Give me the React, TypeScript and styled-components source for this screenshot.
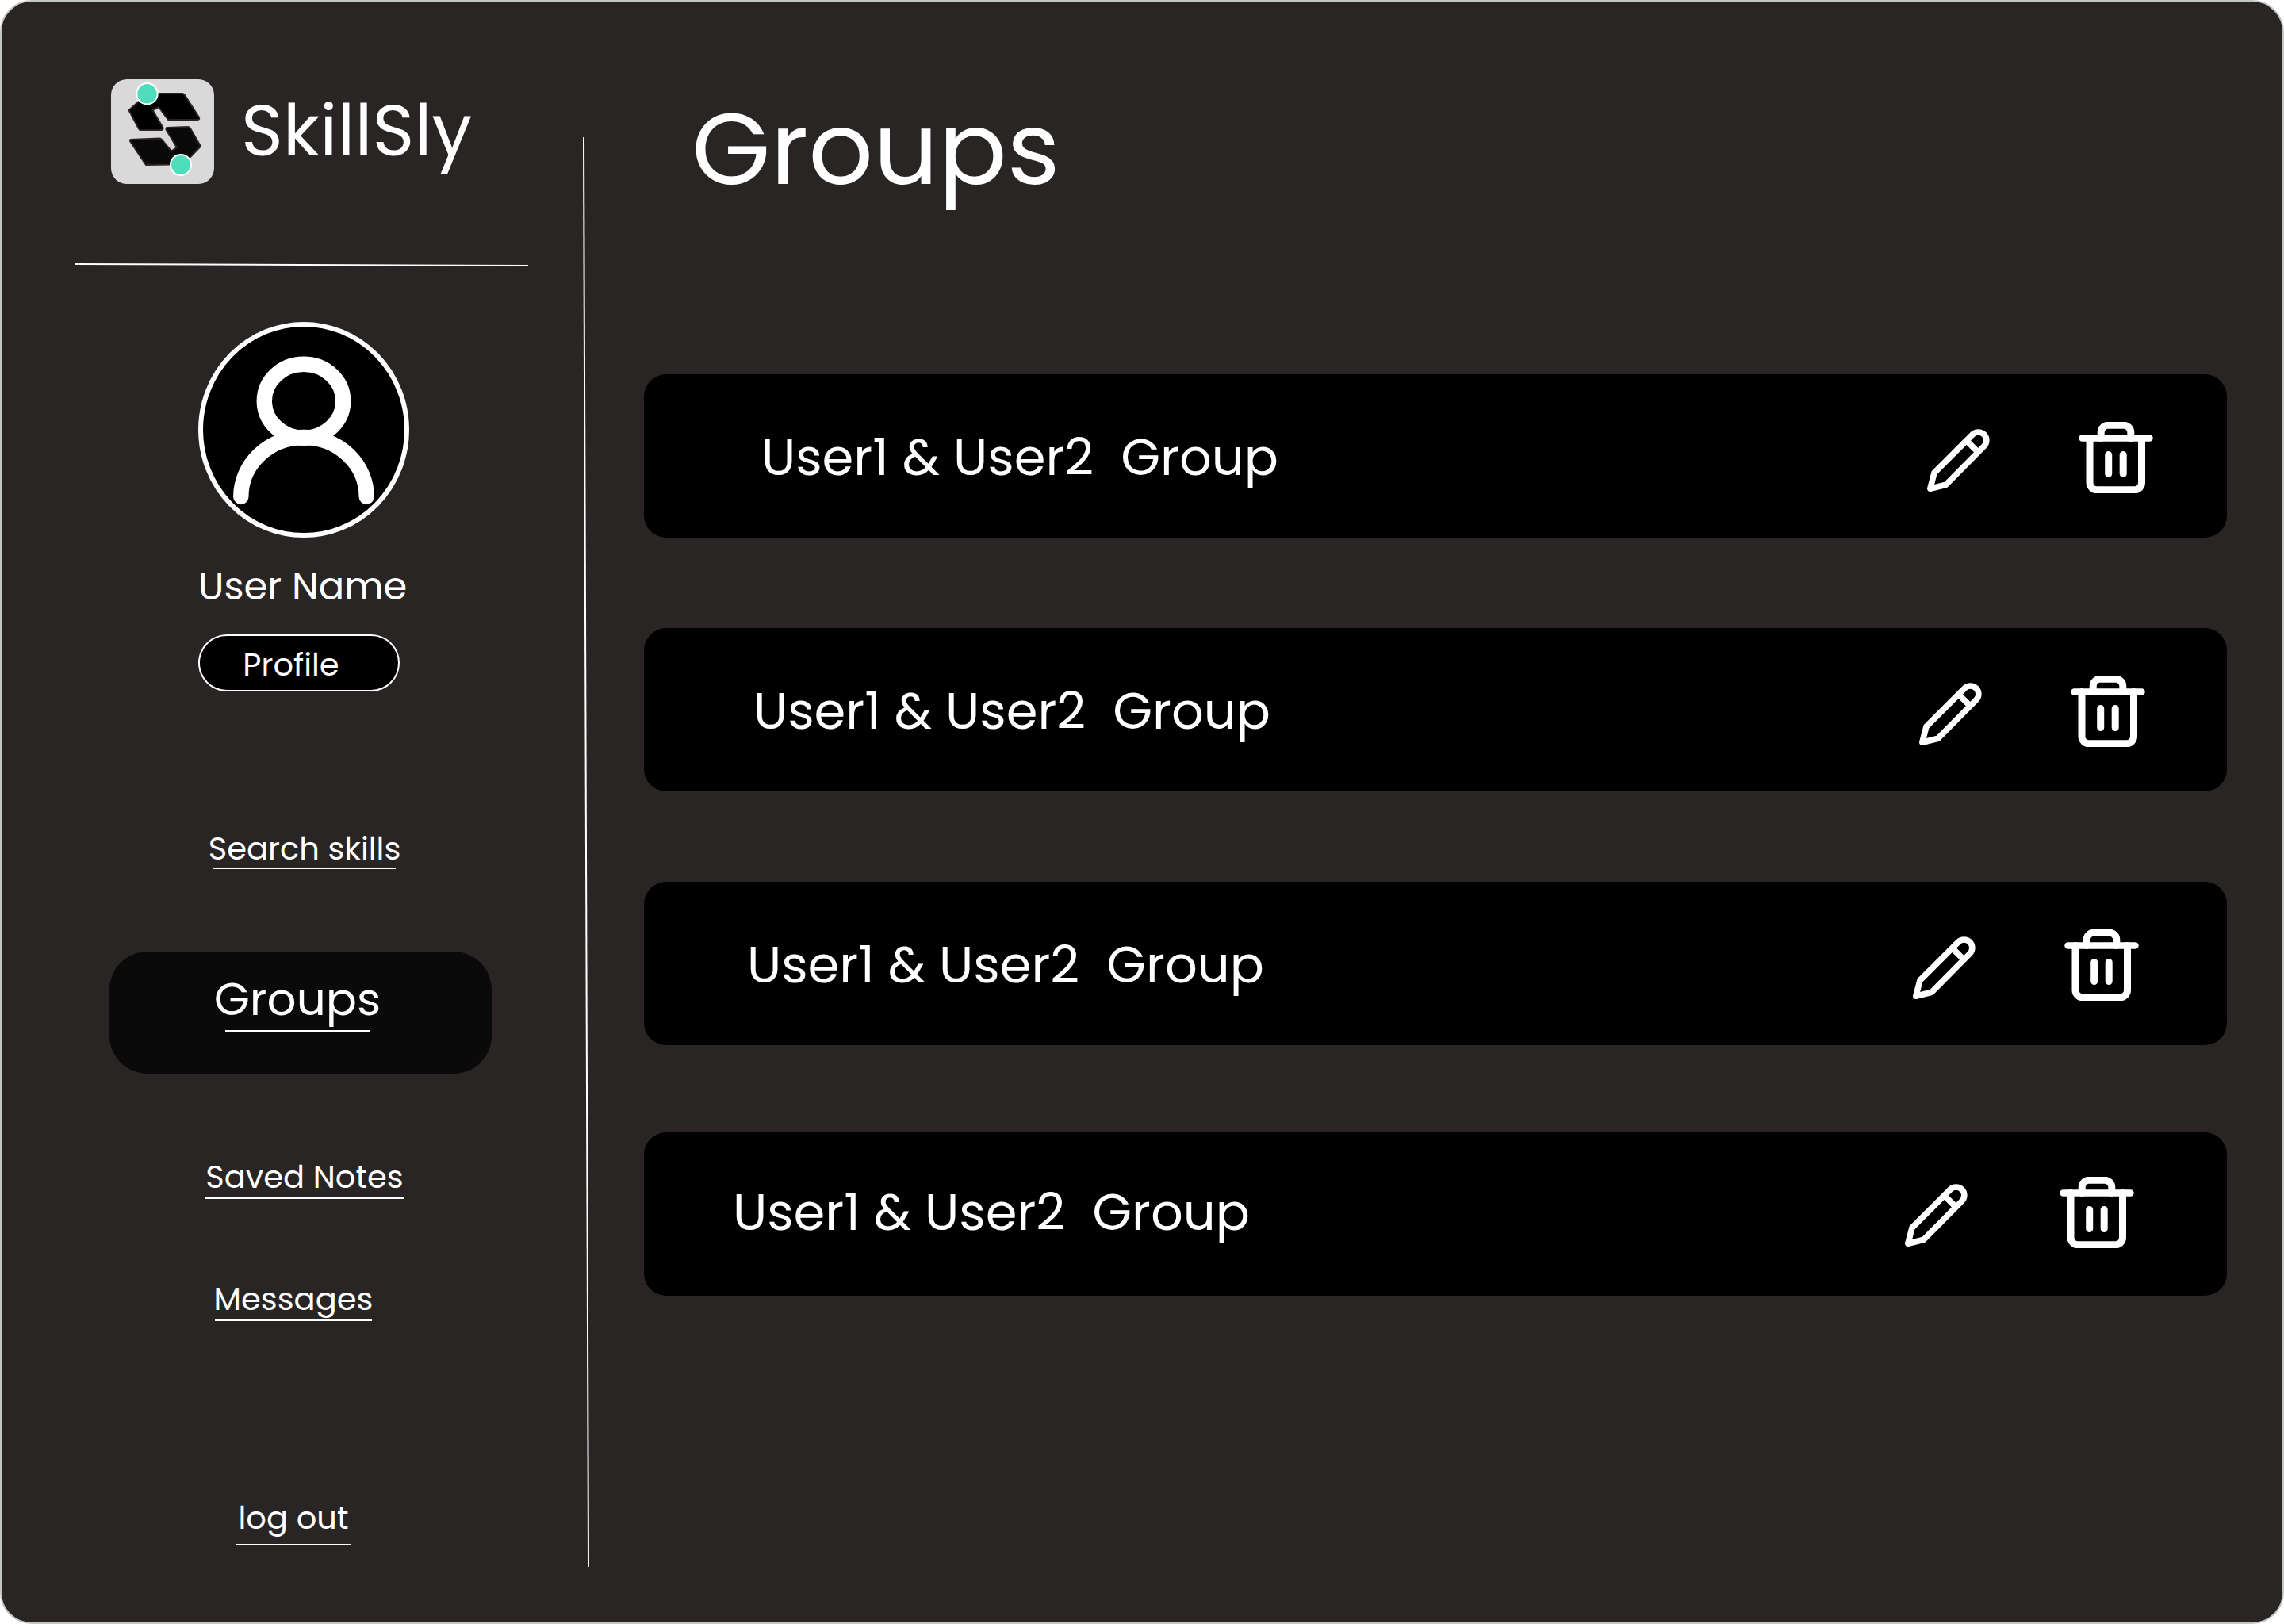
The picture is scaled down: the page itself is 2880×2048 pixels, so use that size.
import React from "react";
import styled, { createGlobalStyle } from "styled-components";

const Global = createGlobalStyle`
  *, *::before, *::after { box-sizing: border-box; }
  body { margin: 0; background: #ffffff; }
  h1, p, ul { margin: 0; padding: 0; font-weight: 400; }
  ul { list-style: none; }
  a { color: inherit; text-decoration: none; }
  button { font: inherit; color: inherit; cursor: pointer; }
`;

const Frame = styled.div`
  display: flex;
  min-height: 100vh;
  padding: 98px 70px 70px 92px;
  border: 2px solid #c4c6c4;
  border-radius: 40px;
  background: #292524;
  color: #ffffff;
  font-family: Poppins, Inter, "Open Sans", sans-serif;
`;

const Sidebar = styled.aside`
  display: flex;
  flex-direction: column;
  width: 572px;
  flex: none;
`;

const Brand = styled.a`
  display: flex;
  align-items: flex-start;
  gap: 34px;
  height: 132px;
  margin-left: 46px;
  font-size: 90px;
  line-height: 130px;
`;

const Rule = styled.svg`
  display: block;
  flex: none;
  width: 100%;
  height: 6px;
  margin-top: 98px;
`;

const Divider = styled.svg`
  display: block;
  flex: none;
  width: 10px;
  margin: 73px 0 0 69px;
`;

const Account = styled.section`
  display: flex;
  flex-direction: column;
  align-items: flex-start;
  margin: 70px 0 0 156px;
`;

const UserName = styled.p`
  width: 262px;
  margin-top: 30px;
  font-size: 48px;
  line-height: 64px;
  text-align: center;
  white-space: nowrap;
`;

const ProfileButton = styled.button`
  width: 254px;
  height: 72px;
  margin-top: 28px;
  padding: 4px 20px 0 0;
  border: 2px solid #ffffff;
  border-radius: 36px;
  background: #000000;
  font-size: 40px;
  line-height: 64px;
`;

const Nav = styled.nav`
  display: flex;
  flex-direction: column;
  align-items: center;
  flex: 1;
  width: 482px;
  margin: 174px 0 27px 44px;
`;

const NavLink = styled.a<{ $line: number; $gap: number; $space: number; $lean: "left" | "right" }>`
  display: flex;
  flex-direction: column;
  align-items: center;
  margin-top: ${(p) => p.$space}px;
  ${(p) => (p.$lean === "left" ? "margin-right: 18px;" : "margin-left: 10px;")}
  font-size: 40px;
  line-height: 48px;
  white-space: nowrap;

  &::after {
    content: "";
    width: ${(p) => p.$line}px;
    height: 2px;
    margin-top: ${(p) => p.$gap}px;
    background: #ffffff;
  }
`;

const ActiveLink = styled.a`
  display: flex;
  flex-direction: column;
  align-items: center;
  width: 100%;
  height: 154px;
  margin-top: 104px;
  padding: 25px 8px 0 0;
  border-radius: 48px;
  background: #0a0a0a;
  font-size: 58px;
  line-height: 70px;

  &::after {
    content: "";
    width: 182px;
    height: 3px;
    margin-top: 4px;
    background: #ffffff;
  }
`;

const Spacer = styled.div`
  flex: 1;
`;

const Main = styled.main`
  flex: 1;
  min-width: 0;
  padding-left: 67px;
`;

const Title = styled.h1`
  padding: 8px 0 0 60px;
  font-size: 128px;
  line-height: 160px;
`;

const GroupList = styled.ul`
  display: flex;
  flex-direction: column;
  gap: 114px;
  margin-top: 204px;
`;

const GroupRow = styled.li<{ $pad: string; $gap: number }>`
  display: flex;
  align-items: center;
  gap: ${(p) => p.$gap}px;
  height: 206px;
  padding: ${(p) => p.$pad};
  border-radius: 28px;
  background: #000000;

  &:last-child { margin-top: -4px; }
`;

const GroupName = styled.span`
  flex: 1;
  font-size: 64px;
  line-height: 80px;
  white-space: pre;
`;

const IconButton = styled.button`
  display: block;
  padding: 0;
  border: 0;
  background: none;

  svg { display: block; }
`;

const EditButton = styled(IconButton)`
  padding-top: 8px;
`;

const Logo = () => (
  <svg width="130" height="132" viewBox="0 0 130 132" aria-hidden="true">
    <rect width="130" height="132" rx="20" fill="#d9d9d9" />
    <g stroke="#2a2224" strokeWidth="2" strokeLinejoin="round">
      <path d="M58 18 H90 Q92 18 93 20 L111 48 Q112 51 109 51 H72 L60 35 L52.500 39 L65.500 61 Q66 64 63 64 H37 Q35.500 64 35 62.500 L22.500 39 L36 27 Z" fill="#000000" />
      <path d="M24.500 76 L61 74.500 Q63 74.500 64 76 L76 90.500 L83 86 L69.500 63.500 Q69 61 71 61 L97 60 Q99 60 100 62 L113 84.500 L99 99 L76 107.500 L44 108 L24 78 Z" fill="#0a0a0a" />
    </g>
    <circle cx="45.5" cy="18.3" r="13.2" fill="#4fddbb" stroke="#ffffff" strokeWidth="2" />
    <circle cx="88" cy="108" r="13" fill="#4fddbb" stroke="#ffffff" strokeWidth="2" />
  </svg>
);

const Avatar = () => (
  <svg width="266" height="272" viewBox="0 0 266 272" role="img" aria-label="User avatar">
    <ellipse cx="133" cy="136" rx="130" ry="133" fill="#000000" stroke="#ffffff" strokeWidth="6" />
    <g fill="none" stroke="#ffffff" strokeWidth="19.400" strokeLinecap="round">
      <ellipse cx="133" cy="99.8" rx="49.7" ry="46.5" />
      <path d="M53.8 220.500 A79.2 75 0 0 1 212.2 220.500" />
    </g>
  </svg>
);

const Pencil = () => (
  <svg width="80" height="80" viewBox="0 0 80 80" fill="none" stroke="#ffffff" strokeWidth="7.6" strokeLinecap="round" strokeLinejoin="round" aria-hidden="true">
    <path d="M58.2 7 A10.3 10.3 0 0 1 72.8 21.600 L24.8 70.2 L4.800 75.2 L10 55.300 Z" />
    <path d="M51.500 15.500 L64 28" />
  </svg>
);

const Trash = () => (
  <svg width="94" height="90" viewBox="0 0 94 90" fill="none" stroke="#ffffff" strokeWidth="9" strokeLinecap="round" strokeLinejoin="round" aria-hidden="true">
    <path d="M4.5 20.5 H89.5" strokeWidth="8.4" />
    <path d="M14 20.5 V77 A9 9 0 0 0 23 85.8 H70.5 A9 9 0 0 0 79.5 77 V20.5" />
    <path d="M28.2 20.5 V13 A9 9 0 0 1 37.2 4.2 H56.8 A9 9 0 0 1 65.8 13 V20.5" />
    <path d="M37.7 41.5 V65.5 M56.2 41.5 V65.5" />
  </svg>
);

const groups = [
  { id: 1, pad: "4px 93px 0 148px", gap: 112 },
  { id: 2, pad: "4px 103px 0 138px", gap: 112 },
  { id: 3, pad: "4px 111px 0 130px", gap: 112 },
  { id: 4, pad: "0 117px 4px 112px", gap: 116 },
];

export default function App() {
  return (
    <>
      <Global />
      <Frame>
        <Sidebar>
          <Brand href="#home">
            <Logo />
            <span>SkillSly</span>
          </Brand>
          <Rule viewBox="0 0 572 6" preserveAspectRatio="none" aria-hidden="true">
            <path d="M0 3 L572 5" stroke="#ffffff" strokeWidth="2" />
          </Rule>
          <Account>
            <Avatar />
            <UserName>User Name</UserName>
            <ProfileButton type="button">Profile</ProfileButton>
          </Account>
          <Nav>
            <NavLink href="#search" $line={230} $gap={0} $space={0} $lean="right">Search skills</NavLink>
            <ActiveLink href="#groups" aria-current="page">Groups</ActiveLink>
            <NavLink href="#notes" $line={252} $gap={2} $space={106} $lean="right">Saved Notes</NavLink>
            <NavLink href="#messages" $line={198} $gap={2} $space={102} $lean="left">Messages</NavLink>
            <Spacer />
            <NavLink href="#logout" $line={146} $gap={9} $space={0} $lean="left">log out</NavLink>
          </Nav>
        </Sidebar>
        <Divider viewBox="0 0 10 1803" preserveAspectRatio="none" aria-hidden="true">
          <path d="M1 0 L7 1803" stroke="#ffffff" strokeWidth="2" />
        </Divider>
        <Main>
          <Title>Groups</Title>
          <GroupList>
            {groups.map((g) => (
              <GroupRow key={g.id} $pad={g.pad} $gap={g.gap}>
                <GroupName>{"User1 & User2  Group"}</GroupName>
                <EditButton type="button" aria-label="Edit group">
                  <Pencil />
                </EditButton>
                <IconButton type="button" aria-label="Delete group">
                  <Trash />
                </IconButton>
              </GroupRow>
            ))}
          </GroupList>
        </Main>
      </Frame>
    </>
  );
}
